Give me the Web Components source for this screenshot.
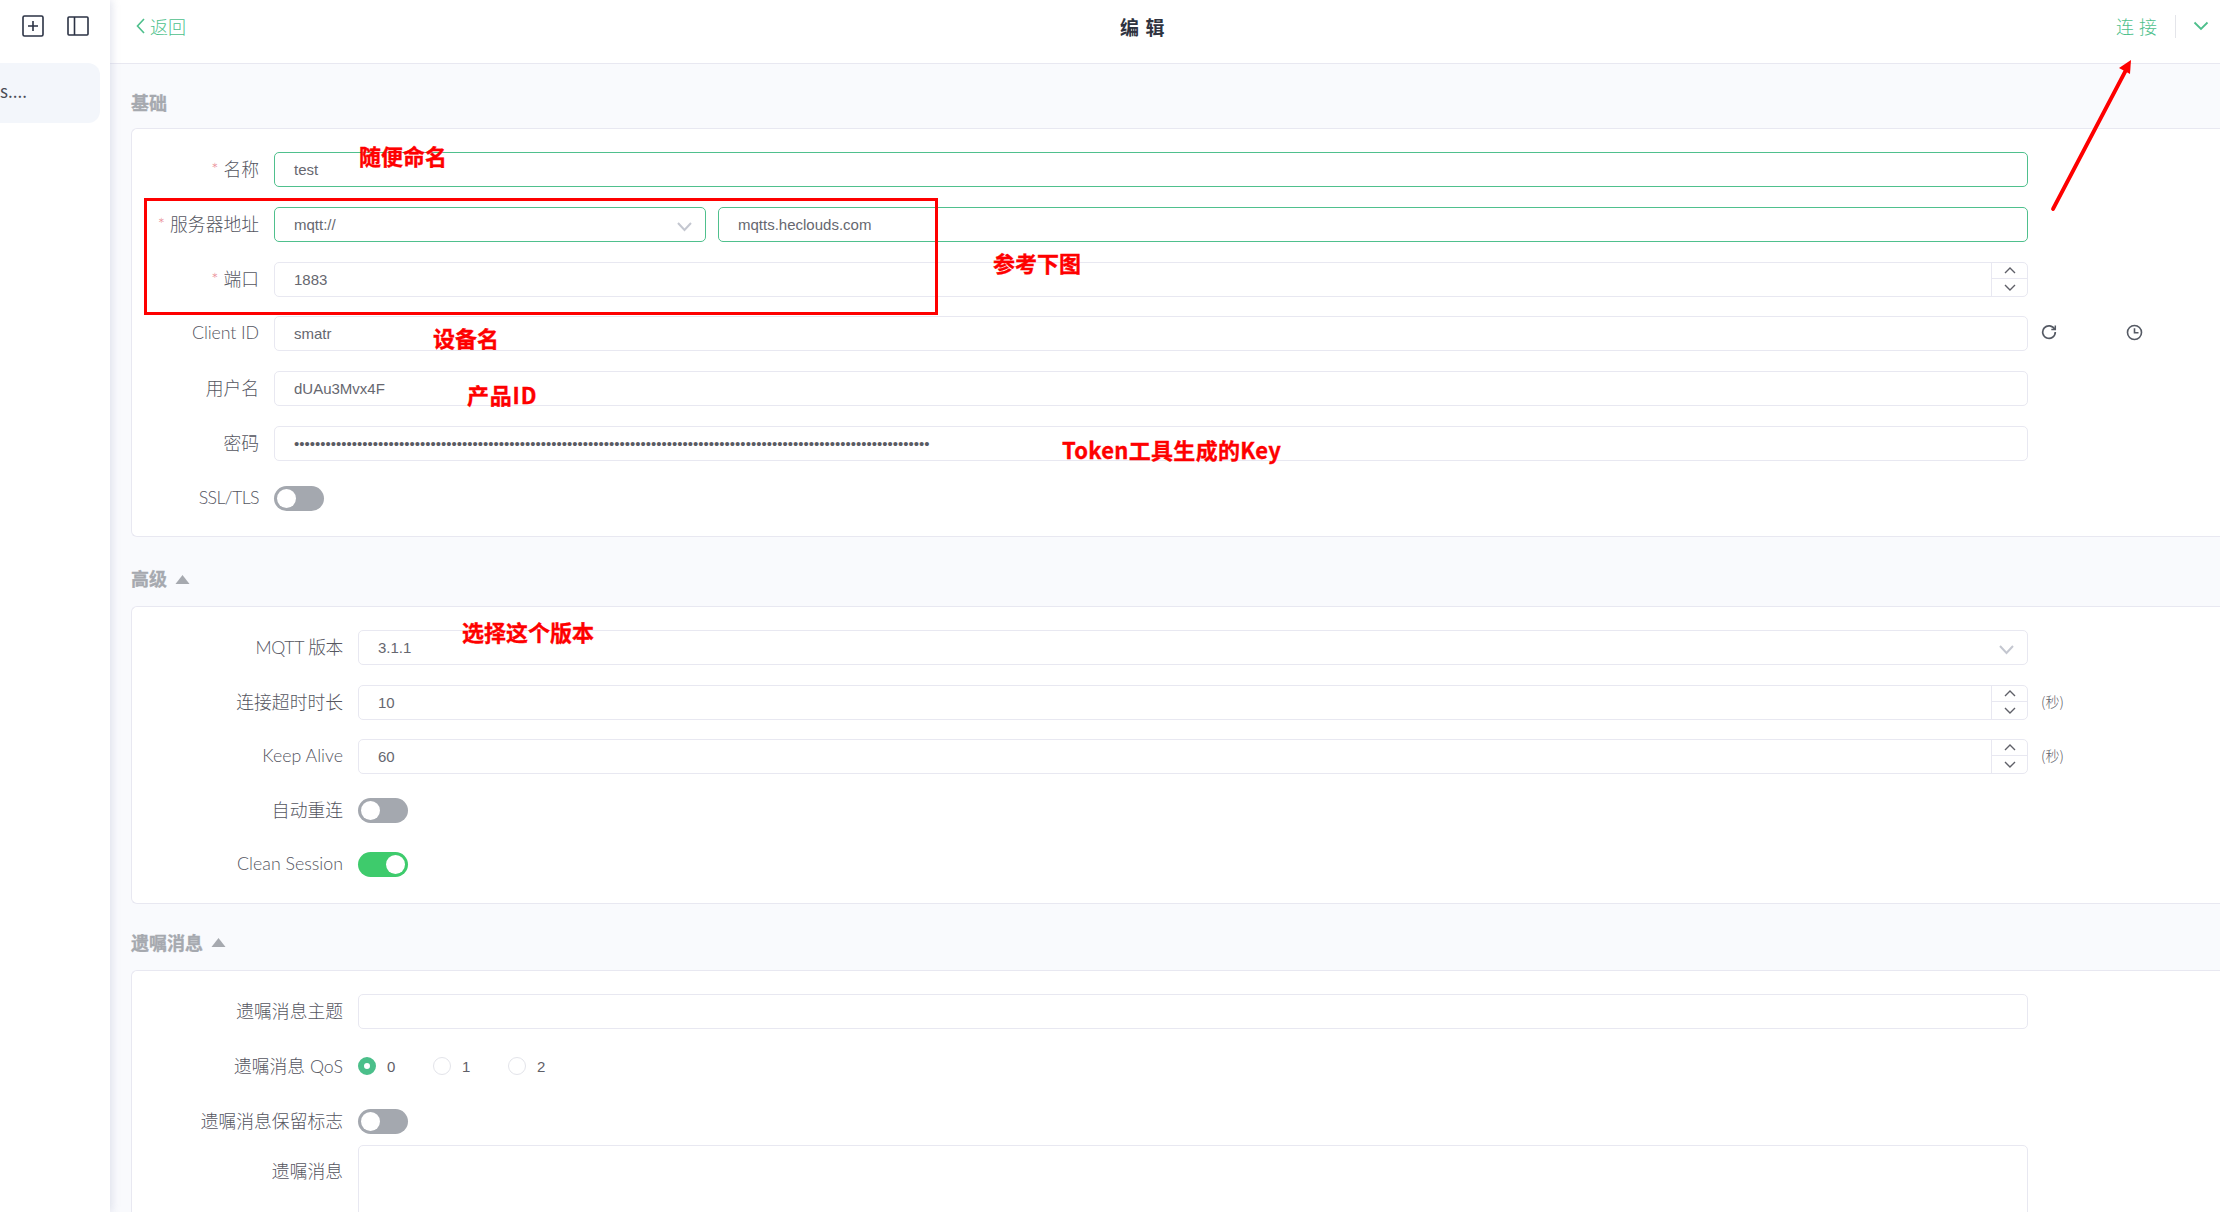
<!DOCTYPE html>
<html lang="zh-CN"><head><meta charset="utf-8"><title>编辑</title>
<style>
html,body{margin:0;padding:0;width:2220px;height:1212px;overflow:hidden;background:#f9fafd}
body{font-family:"Liberation Sans","Noto Sans CJK SC",sans-serif;color:#5c5d66}
</style></head><body>
<mqtt-app>
  <side-bar slot="side"></side-bar>
  <top-bar slot="top"></top-bar>
  <form-section title-text="基础" label-w="142" step="54.75" style="margin-top:27px;--tgap:13px">
    <form-row label="名称" req><text-field focus style="flex:1">test</text-field></form-row>
    <form-row label="服务器地址" req>
      <div style="display:flex;gap:12px;flex:1">
        <select-field focus style="width:432px">mqtt://</select-field>
        <text-field focus style="flex:1">mqtts.heclouds.com</text-field>
      </div>
    </form-row>
    <form-row label="端口" req><number-field style="flex:1">1883</number-field></form-row>
    <form-row label="Client ID" style="--ls:-.1px"><text-field style="flex:1">smatr</text-field>
      <row-tools slot="extra"></row-tools></form-row>
    <form-row label="用户名"><text-field style="flex:1">dUAu3Mvx4F</text-field></form-row>
    <form-row label="密码"><text-field dots style="flex:1">•••••••••••••••••••••••••••••••••••••••••••••••••••••••••••••••••••••••••••••••••••••••••••••••••••••••••••••••••••••••••</text-field></form-row>
    <form-row label="SSL/TLS" style="--ls:-.6px"><toggle-switch></toggle-switch></form-row>
  </form-section>
  <form-section title-text="高级" label-w="226" caret step="54.3" style="margin-bottom:27px">
    <form-row label="MQTT 版本" style="--ls:-.35px"><select-field style="flex:1">3.1.1</select-field></form-row>
    <form-row label="连接超时时长"><number-field style="flex:1">10</number-field><unit-text slot="extra">(秒)</unit-text></form-row>
    <form-row label="Keep Alive"><number-field style="flex:1">60</number-field><unit-text slot="extra">(秒)</unit-text></form-row>
    <form-row label="自动重连"><toggle-switch></toggle-switch></form-row>
    <form-row label="Clean Session"><toggle-switch on></toggle-switch></form-row>
  </form-section>
  <form-section title-text="遗嘱消息" label-w="226" caret>
    <form-row label="遗嘱消息主题"><text-field style="flex:1"></text-field></form-row>
    <form-row label="遗嘱消息 QoS"><radio-group></radio-group></form-row>
    <form-row label="遗嘱消息保留标志" style="margin-bottom:6px"><toggle-switch></toggle-switch></form-row>
    <form-row label="遗嘱消息" tall><area-field style="flex:1"></area-field></form-row>
  </form-section>

  <red-box slot="over" style="left:144px;top:198px;width:794px;height:117px"></red-box>
  <red-arrow slot="over"></red-arrow>
  <red-note slot="over" style="left:359px;top:140px">随便命名</red-note>
  <red-note slot="over" style="left:993px;top:247px">参考下图</red-note>
  <red-note slot="over" style="left:433px;top:322px">设备名</red-note>
  <red-note slot="over" style="left:467px;top:379px;letter-spacing:.8px">产品ID</red-note>
  <red-note slot="over" style="left:1062px;top:434px;letter-spacing:.3px">Token工具生成的Key</red-note>
  <red-note slot="over" style="left:462px;top:616px">选择这个版本</red-note>
</mqtt-app>
<script>
const def=(name,css,html,extra)=>{
  customElements.define(name,class extends HTMLElement{
    constructor(){super();const r=this.attachShadow({mode:'open'});
      r.innerHTML=`<style>${css}</style>`+(typeof html==='function'?html(this):html);}
    connectedCallback(){extra&&extra(this)}
  });
};
const CN='"Noto Sans CJK SC","Liberation Sans",sans-serif';
const UP='<svg width="14" height="9" viewBox="0 0 14 9" fill="none" stroke="#5f6068" stroke-width="1.4"><path d="M2 7l5-5 5 5"/></svg>';
const DN='<svg width="14" height="9" viewBox="0 0 14 9" fill="none" stroke="#5f6068" stroke-width="1.4"><path d="M2 2l5 5 5-5"/></svg>';

def('mqtt-app',`:host{display:grid;grid-template-columns:110px 1fr;grid-template-rows:64px 1fr;width:2220px;height:1212px;position:relative;overflow:hidden}
 .side{grid-row:1/3;grid-column:1;position:relative;z-index:2;display:block}
 .top{grid-row:1;grid-column:2}
 .body{grid-row:2;grid-column:2;overflow:hidden;padding-left:21px;display:flow-root}
 .over{position:absolute;inset:0;pointer-events:none;z-index:5}`,
 `<div class="side"><slot name="side"></slot></div><div class="top"><slot name="top"></slot></div><div class="body"><slot></slot></div><div class="over"><slot name="over"></slot></div>`);

def('side-bar',`:host{display:block;height:1212px;width:110px;background:#fff;box-shadow:2px 0 8px rgba(190,195,215,.45);box-sizing:border-box;padding-top:15px;overflow:hidden}
 .ic{display:flex;gap:23px;padding-left:22px;height:48px;align-items:flex-start}
 svg{display:block}
 .item{width:100px;height:60px;background:#f3f6fb;border-radius:0 12px 12px 0;display:flex;align-items:center;font:17px ${CN};color:#4a4b55;box-sizing:border-box;white-space:nowrap;overflow:hidden}
 .item span{display:block;margin-top:-6px}`,
 `<div class="ic">
  <svg width="22" height="22" viewBox="0 0 22 22" fill="none" stroke="#2b3244" stroke-width="1.6"><rect x="1" y="1" width="20" height="20" rx="1.5"/><path d="M11 6v10M6 11h10"/></svg>
  <svg width="22" height="22" viewBox="0 0 22 22" fill="none" stroke="#2b3244" stroke-width="1.6"><rect x="1" y="2" width="20" height="18" rx="1"/><path d="M7.5 2v18"/></svg>
 </div><div class="item"><span>s....</span></div>`);

def('top-bar',`:host{display:flex;align-items:center;height:64px;box-sizing:border-box;background:#fff;border-bottom:1px solid #e8e8f1;position:relative;padding:0 0 11px 25px;font:18px ${CN}}
 .back{display:flex;align-items:center;gap:4px;color:#4dbf8c;width:957px;flex:none}
 .back span{font-weight:300}
 .title{flex:none;width:1024px;padding-left:28px;box-sizing:border-box;font-weight:700;font-size:19px;letter-spacing:6.5px;color:#2f3340}
 .conn{color:#4dbf8c;letter-spacing:5px;width:47px;white-space:nowrap;flex:none;font-size:18px;font-weight:300;margin-right:12px}
 .sep{width:1px;height:23px;background:#e4e5ea;flex:none;margin-right:17px}
 svg{display:block;flex:none}`,
 `<div class="back"><svg width="11" height="18" viewBox="0 0 11 18" fill="none" stroke="#4dbf8c" stroke-width="1.6"><path d="M9 2L2.5 9 9 16"/></svg><span>返回</span></div>
 <div class="title">编辑</div>
 <div class="conn">连接</div><div class="sep"></div>
 <svg width="16" height="10" viewBox="0 0 16 10" fill="none" stroke="#4dbf8c" stroke-width="1.8"><path d="M1.5 1.5L8 8l6.5-6.5"/></svg>`);

def('form-section',`:host{display:block;margin-bottom:30px;margin-right:-20px}
 .t{display:flex;align-items:center;gap:8px;height:24px;margin:0 0 var(--tgap,15px);font:700 18px ${CN};color:#a6a9af}
 .t span{margin-top:-2px;-webkit-text-stroke:.3px #a6a9af}
 .card{background:#fff;border:1px solid #e8e8f1;border-right:0;border-radius:6px 0 0 6px;padding:23px 0 1px;box-sizing:border-box}
 svg{display:block}`,
 h=>`<div class="t"><span>${h.getAttribute('title-text')}</span>${h.hasAttribute('caret')?'<svg width="15" height="11" viewBox="0 0 15 11"><path d="M7.5 1L14.5 10H.5z" fill="#a6a9af"/></svg>':''}</div><div class="card"><slot></slot></div>`,
 h=>{h.style.setProperty('--lw',h.getAttribute('label-w')+'px');h.style.setProperty('--step',(h.getAttribute('step')||'55')+'px');});

def('form-row',`:host{display:grid;grid-template-columns:var(--lw) 1fr 212px;height:35px;margin-bottom:calc(var(--step) - 35px);align-items:center}
 :host([tall]){height:auto;align-items:start}
 .l{text-align:right;padding-right:15px;font:300 17.8px Lato,"Noto Sans CJK SC",sans-serif;color:#55565f;white-space:nowrap;margin-top:-3px;letter-spacing:var(--ls,0)}
 :host([tall]) .l{padding-top:15px}
 i{font-style:normal;color:#e8808a;margin-right:5px;font-size:17px}
 .f{display:flex;align-items:center;min-width:0}`,
 h=>`<div class="l">${h.hasAttribute('req')?'<i>*</i>':''}${h.getAttribute('label')}</div><div class="f"><slot></slot></div><div><slot name="extra"></slot></div>`);

const fieldCss=`:host{display:block;height:35px;box-sizing:border-box;border:1px solid #e8e8f1;border-radius:5px;background:#fff;font:15px "Liberation Sans","Noto Sans CJK SC",sans-serif;color:#66676f;position:relative;min-width:0}
 :host([focus]){border-color:#4fc08d}
 .v{display:block;padding-left:19px;line-height:33px;white-space:nowrap;overflow:hidden}`;
def('text-field',fieldCss+`:host([dots]) .v{color:#5a5b63}`,`<span class="v"><slot></slot></span>`);
def('select-field',fieldCss+` svg{position:absolute;right:12px;top:13px}`,
 `<span class="v"><slot></slot></span><svg width="17" height="11" viewBox="0 0 17 11" fill="none" stroke="#c4c7d0" stroke-width="2"><path d="M2 2l6.5 7L15 2"/></svg>`);
def('number-field',fieldCss+` .s{position:absolute;right:0;top:0;bottom:0;width:35px;border-left:1px solid #e8e8f1;display:grid;grid-template-rows:1fr 1fr}
 .s div{display:flex;align-items:center;justify-content:center}.s div:first-child{border-bottom:1px solid #e8e8f1}`,
 `<span class="v"><slot></slot></span><div class="s"><div>${UP}</div><div>${DN}</div></div>`);
def('area-field',`:host{display:block;height:110px;border:1px solid #e8e8f1;border-radius:5px;background:#fff;box-sizing:border-box}`,``);
def('toggle-switch',`:host{display:block;width:50px;height:25px;border-radius:13px;background:#a4a8af;position:relative}
 :host([on]){background:#3ecb6c}
 b{position:absolute;left:3px;top:3px;width:19px;height:19px;border-radius:50%;background:#fff}
 :host([on]) b{left:28px}`,`<b></b>`);
def('radio-group',`:host{display:flex;align-items:center;font:15px "Liberation Sans",sans-serif;color:#5f6068}
 .o{display:flex;align-items:center;gap:11px}
 .o:first-child{gap:14px}
 .d{width:18px;height:18px;border-radius:50%;border:1px solid #e3e4ea;box-sizing:border-box;background:#fff;flex:none}
 .d.on{border:6px solid #4bbf8a}
 span{width:46px;flex:none}`,
 `<div class="o"><div class="d on"></div><span>0</span></div><div class="o"><div class="d"></div><span>1</span></div><div class="o"><div class="d"></div><span>2</span></div>`);
def('unit-text',`:host{display:block;padding-left:13px;font:300 14px ${CN};color:#5f6068;margin-top:-3px}`,`<slot></slot>`);
def('row-tools',`:host{display:flex;align-items:center;padding-left:13px;margin-top:-3px}svg{display:block}.g{width:85px}`,
 `<div class="g"><svg width="16" height="16" viewBox="0 0 16 16" fill="none" stroke="#555a64" stroke-width="1.7"><path d="M13.6 5.2A6.3 6.3 0 1 0 14.3 8"/><path d="M14.3 1.6v4h-4" stroke-width="1.5"/></svg></div>
  <svg width="17" height="17" viewBox="0 0 17 17" fill="none" stroke="#555a64" stroke-width="1.6"><circle cx="8.5" cy="8.5" r="7"/><path d="M8.5 4.2v4.6h4"/></svg>`);
def('red-note',`:host{position:absolute;display:block;font:700 22px/30px "Noto Sans CJK SC","Liberation Sans",sans-serif;color:#fe0000;white-space:nowrap;-webkit-text-stroke:.35px #fe0000}`,`<slot></slot>`);
def('red-box',`:host{position:absolute;display:block;box-sizing:border-box;border:3px solid #fe0000}`,``);
def('red-arrow',`:host{position:absolute;left:2040px;top:50px;display:block}svg{display:block}`,
 `<svg width="100" height="170" viewBox="2040 50 100 170"><path d="M2053 209L2126 70" stroke="#fe0000" stroke-width="3.8" stroke-linecap="round" fill="none"/><path d="M2131 60l-12 8 11 6z" fill="#fe0000"/></svg>`);
</script>
</body></html>
